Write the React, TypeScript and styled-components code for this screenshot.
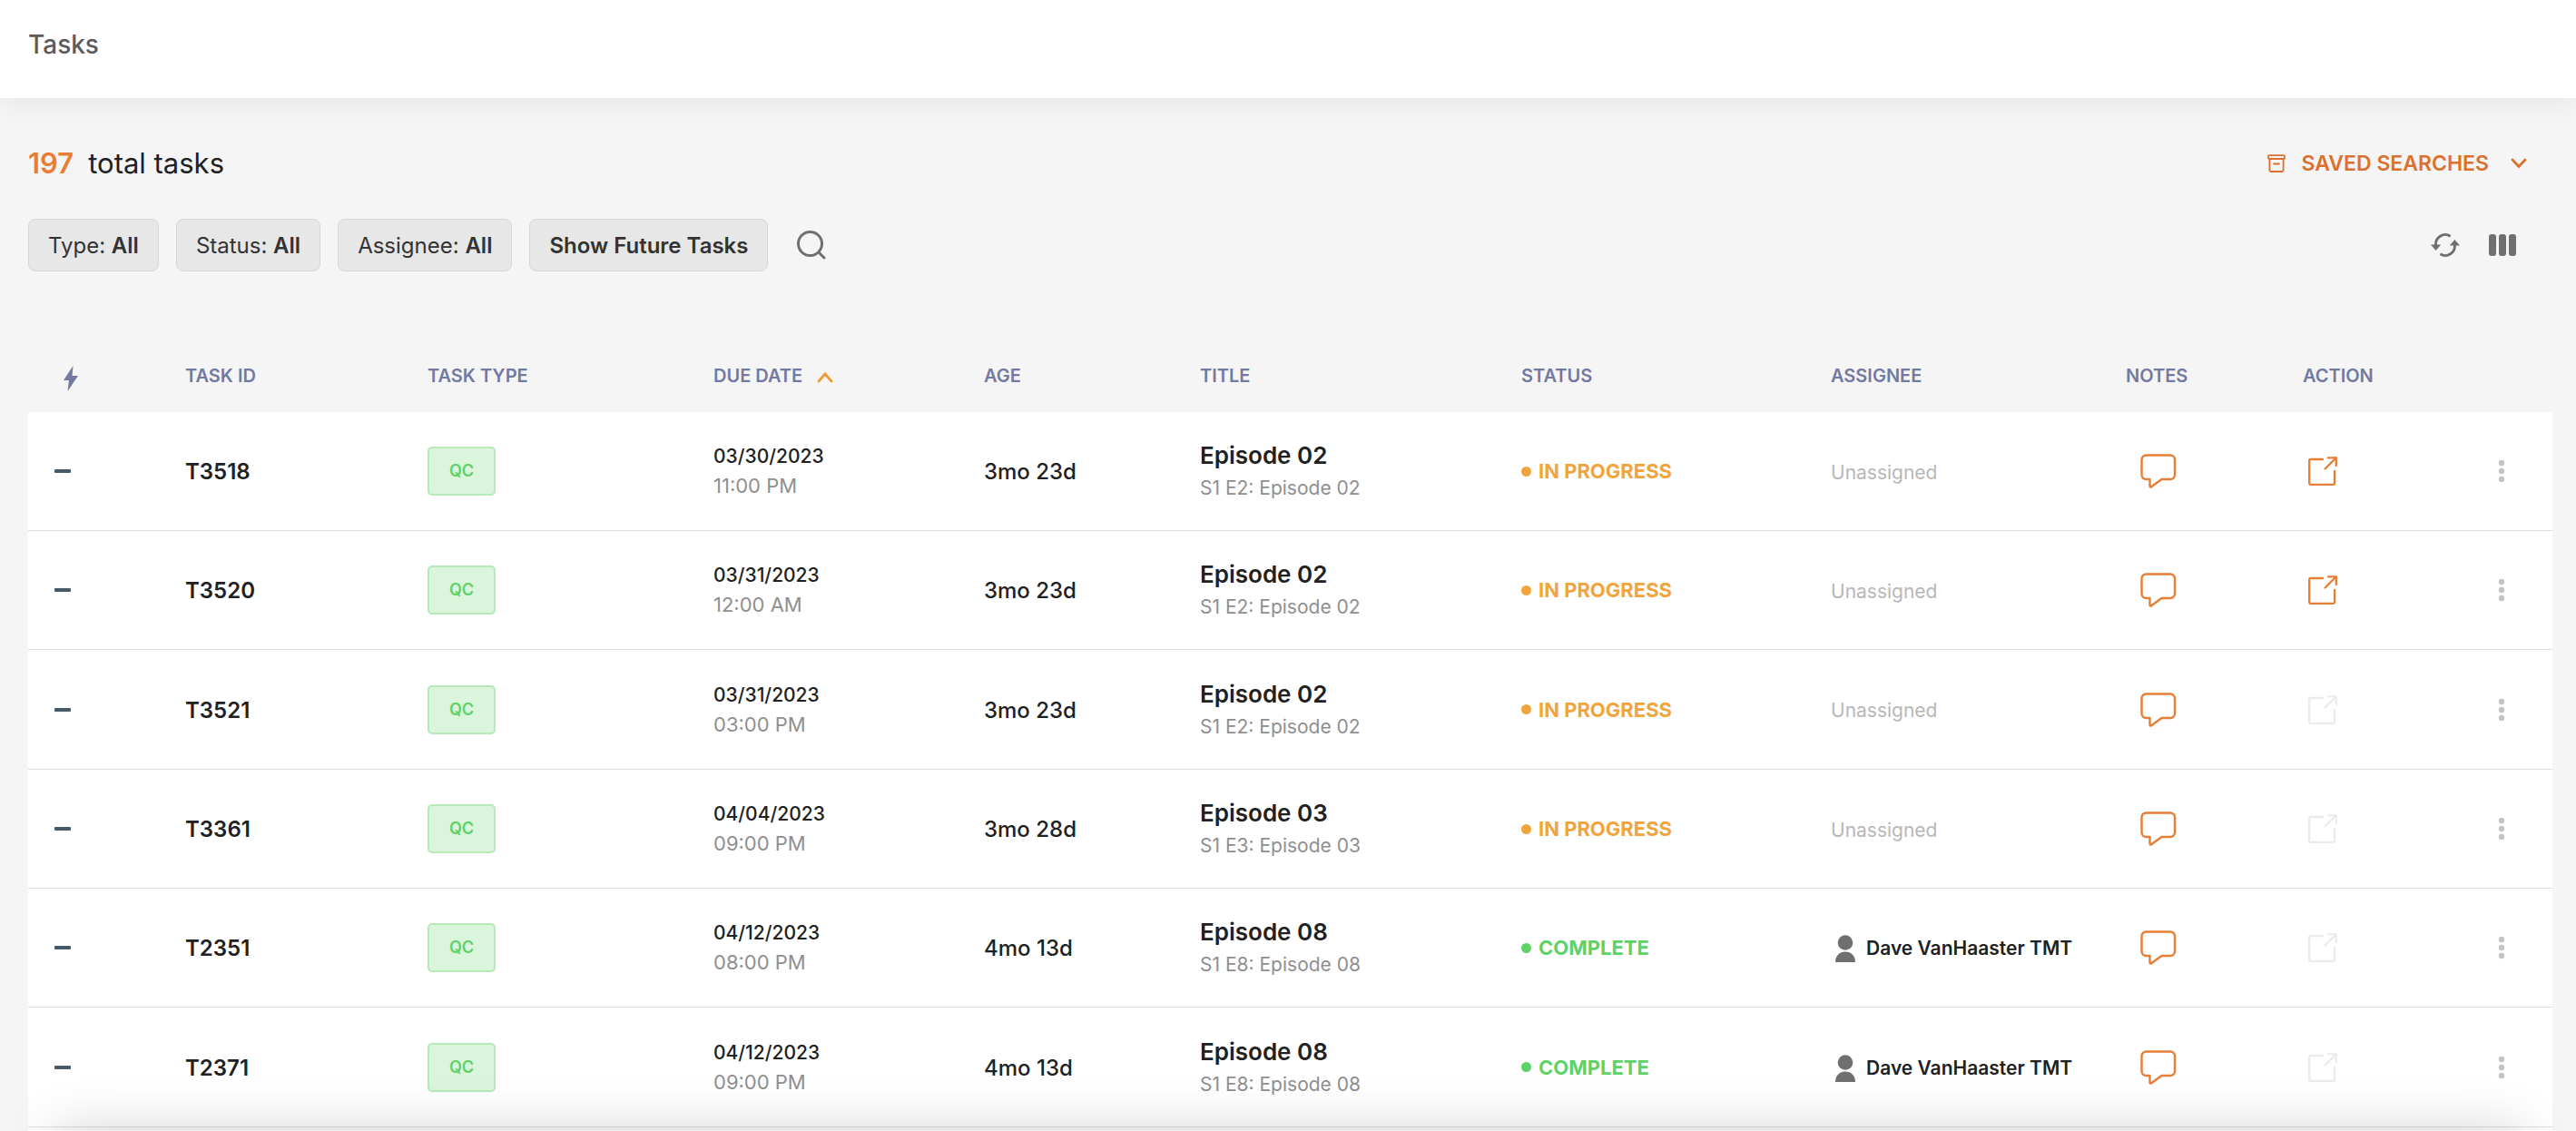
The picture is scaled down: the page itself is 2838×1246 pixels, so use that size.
import React from "react";
import styled, { createGlobalStyle } from "styled-components";

const GlobalStyle = createGlobalStyle`
  * { box-sizing: border-box; }
  body {
    margin: 0;
    background: #f5f5f5;
    color: #212121;
    font-family: Inter, "Liberation Sans", sans-serif;
    -webkit-font-smoothing: antialiased;
  }
  button { font: inherit; color: inherit; cursor: pointer; }
  h1, p { margin: 0; font-weight: 400; }
`;

const Page = styled.div`
  display: flex;
  flex-direction: column;
  height: 100vh;
  overflow: hidden;
`;

const TopBar = styled.header`
  flex: none;
  height: 108px;
  padding: 32px 31px;
  background: #fff;
  box-shadow: 0 0 36px rgba(0, 0, 0, 0.09);
`;

const PageTitle = styled.h1`
  font-size: 28px;
  line-height: 34px;
  font-weight: 500;
  color: #5b5b5b;
`;

const Main = styled.main`
  flex: 1;
  min-height: 0;
  display: flex;
  flex-direction: column;
  padding: 52px 26px 0 31px;
`;

const Bar = styled.div`
  display: flex;
  align-items: center;
  justify-content: space-between;
  padding-right: 28px;
`;

const SummaryBar = styled(Bar)`
  height: 40px;
`;

const Total = styled.p`
  font-size: 31px;
  line-height: 40px;
`;

const Count = styled.strong`
  margin-right: 16px;
  font-weight: 600;
  color: #e67e36;
`;

const SavedSearches = styled.button`
  display: flex;
  align-items: center;
  padding: 0;
  border: 0;
  background: none;
  color: #db702f;
  font-size: 23px;
  line-height: 30px;
  font-weight: 600;
`;

const SavedLabel = styled.span`
  margin: 0 24px 0 18px;
`;

const FilterBar = styled(Bar)`
  height: 58px;
  margin-top: 41px;
  padding-right: 40px;
`;

const Filters = styled.div`
  display: flex;
  align-items: center;
  gap: 19px;
`;

const FilterButton = styled.button`
  height: 58px;
  padding: 2px 21px 0;
  border: 1px solid #d6d6d6;
  border-radius: 8px;
  background: #e7e7e7;
  color: #333;
  font-size: 24px;
  line-height: 30px;

  strong { font-weight: 600; }
`;

const IconButton = styled.button<{ $tone?: string }>`
  display: inline-flex;
  align-items: center;
  justify-content: center;
  padding: 0;
  border: 0;
  background: none;
  color: ${(p) => p.$tone ?? "#6f6f6f"};
  vertical-align: middle;

  &:disabled { cursor: default; }
`;

const SearchButton = styled(IconButton)`
  margin-left: 13px;
`;

const Tools = styled.div`
  display: flex;
  align-items: center;
  gap: 32px;
`;

const TableArea = styled.div`
  flex: 1;
  min-height: 0;
  margin-top: 80px;
  display: flex;
  flex-direction: column;
  overflow: hidden;
`;

const Table = styled.table`
  flex: none;
  width: 100%;
  table-layout: fixed;
  border-collapse: separate;
  border-spacing: 0;
  text-align: left;
`;

const HeadCell = styled.th`
  height: 75px;
  padding: 0 0 6px;
  color: #7279a2;
  font-size: 20px;
  line-height: 24px;
  font-weight: 600;
  white-space: nowrap;
`;

const PriorityHead = styled(HeadCell)`
  padding: 0 0 0 38px;

  svg { display: block; }
`;

const SortButton = styled.button`
  display: flex;
  align-items: center;
  gap: 16px;
  padding: 0;
  border: 0;
  background: none;
`;

const Row = styled.tr`
  height: 131px;

  &:nth-child(3n) { height: 132px; }
`;

const Cell = styled.td`
  padding: 0;
  border-bottom: 1px solid #dedede;
  background: #fff;
  font-size: 24px;
  line-height: 30px;
  font-weight: 500;
  white-space: nowrap;
`;

const TextCell = styled(Cell)`
  padding-top: 2px;
`;

const PriorityCell = styled(Cell)`
  padding-left: 29px;
`;

const IdCell = styled(TextCell)`
  font-weight: 600;
`;

const Dash = styled.span`
  display: block;
  width: 18px;
  height: 4px;
  border-radius: 1px;
  background: #475a6a;
`;

const TypeTag = styled.span`
  display: flex;
  align-items: center;
  justify-content: center;
  width: 75px;
  height: 54px;
  border: 2px solid #b5eab8;
  border-radius: 5px;
  background: #dbf4dc;
  color: #5fd267;
  font-size: 18px;
  line-height: 24px;
  font-weight: 600;
`;

const DateText = styled.div`
  font-size: 21px;
  line-height: 32px;
`;

const TimeText = styled.div`
  font-size: 22px;
  line-height: 32px;
  font-weight: 400;
  color: #8f8f8f;
`;

const TitleText = styled.div`
  font-size: 26px;
  line-height: 36px;
  font-weight: 600;
`;

const SubtitleText = styled.div`
  font-size: 21px;
  line-height: 36px;
  font-weight: 400;
  color: #8f8f8f;
`;

const Status = styled.span<{ $done: boolean }>`
  display: flex;
  align-items: center;
  gap: 8px;
  color: ${(p) => (p.$done ? "#5fd267" : "#f2a43c")};
  font-size: 22px;
  line-height: 28px;
  font-weight: 700;

  &::before {
    content: "";
    width: 11px;
    height: 11px;
    border-radius: 50%;
    background: currentColor;
  }
`;

const Unassigned = styled.span`
  font-size: 21px;
  font-weight: 400;
  color: #b7b7b7;
`;

const Assignee = styled.span`
  display: flex;
  align-items: center;
  gap: 12px;
  padding-left: 5px;
  font-size: 21px;
  font-weight: 600;
`;

const NotesCell = styled(Cell)`
  padding-left: 16px;
`;

const ActionCell = styled(Cell)`
  padding-left: 6px;
`;

const ActionGroup = styled.div`
  display: flex;
  align-items: center;
  justify-content: space-between;
  padding-right: 52px;
`;

const RowsEnd = styled.div`
  flex: 1;
  background: #fff;
`;

const BottomShade = styled.div`
  position: fixed;
  left: 0;
  right: 0;
  top: 100%;
  height: 300px;
  pointer-events: none;
  box-shadow: 0 -60px 60px -60px rgba(0, 0, 0, 0.18);
`;

const ArchiveIcon = () => (
  <svg width="20" height="20" viewBox="0 0 20 20" fill="none" stroke="currentColor" strokeWidth="1.8" aria-hidden="true">
    <rect x="1" y="1.2" width="18" height="3.8" rx="1.2" />
    <path d="M2.4 5v12a2 2 0 0 0 2 2h11.200a2 2 0 0 0 2-2V5" />
    <path d="M7 10.500h6" strokeLinecap="round" />
  </svg>
);

const ChevronDownIcon = () => (
  <svg width="18" height="12" viewBox="0 0 18 12" fill="none" stroke="currentColor" strokeWidth="2.8" strokeLinecap="round" aria-hidden="true">
    <path d="M2 2l7 7.500 7-7.500" />
  </svg>
);

const SortUpIcon = () => (
  <svg width="18" height="16" viewBox="0 0 18 16" fill="none" stroke="#f49a33" strokeWidth="2.8" strokeLinecap="round" aria-hidden="true">
    <path d="M2 14l7-8 7 8" />
  </svg>
);

const SearchIcon = () => (
  <svg width="32" height="32" viewBox="0 0 32 32" fill="none" stroke="currentColor" strokeWidth="3" strokeLinecap="round" aria-hidden="true">
    <circle cx="14.500" cy="14.500" r="13" />
    <path d="M24 24l6 6" />
  </svg>
);

const RefreshIcon = () => (
  <svg width="32" height="26" viewBox="0 0 32 26" aria-hidden="true">
    <g fill="none" stroke="currentColor" strokeWidth="2.8">
      <path d="M5.600 13.500A10.500 10.500 0 0 1 21.600 3.200" />
      <path d="M26.400 12.500A10.500 10.500 0 0 1 10.400 22.800" />
    </g>
    <path d="M0 12.500h11.200L5.600 19z" fill="currentColor" />
    <path d="M20.800 13.500H32L26.400 7z" fill="currentColor" />
  </svg>
);

const ColumnsIcon = () => (
  <svg width="30" height="24" viewBox="0 0 30 24" fill="currentColor" aria-hidden="true">
    <rect x="0" y="0" width="8" height="24" rx="3" />
    <rect x="11" y="0" width="8" height="24" rx="3" />
    <rect x="22" y="0" width="8" height="24" rx="3" />
  </svg>
);

const BoltIcon = () => (
  <svg width="18" height="28" viewBox="0 0 18 28" fill="currentColor" role="img" aria-label="Priority">
    <path d="M11.500 0L1 16h6L5.500 28 17 11h-6.500z" />
  </svg>
);

const NoteIcon = () => (
  <svg width="40" height="38" viewBox="0 0 40 38" fill="none" stroke="currentColor" strokeWidth="2.4" strokeLinejoin="round" aria-hidden="true">
    <path d="M6.500 1.500h26.500a5 5 0 0 1 5 5v16.500a5 5 0 0 1-5 5H23.500L12.200 36.300a1 1 0 0 1-1.700-.8V28H6.500a5 5 0 0 1-5-5V6.500a5 5 0 0 1 5-5z" />
  </svg>
);

const OpenIcon = () => (
  <svg width="32" height="32" viewBox="0 0 32 32" fill="none" stroke="currentColor" strokeWidth="2.3" strokeLinecap="round" strokeLinejoin="round" aria-hidden="true">
    <path d="M16 3H2.400a1.200 1.200 0 0 0-1.200 1.200v25.400a1.200 1.200 0 0 0 1.200 1.200h25.400a1.200 1.200 0 0 0 1.200-1.200V16" />
    <path d="M18.500 13.500L30.500 1.500" />
    <path d="M22 1.300h8.800v8.800" />
  </svg>
);

const KebabIcon = () => (
  <svg width="8" height="28" viewBox="0 0 8 28" fill="currentColor" aria-hidden="true">
    <circle cx="4" cy="5" r="3.200" />
    <circle cx="4" cy="14" r="3.200" />
    <circle cx="4" cy="23" r="3.200" />
  </svg>
);

const PersonIcon = () => (
  <svg width="22" height="30" viewBox="0 0 22 30" fill="#6f6f6f" aria-hidden="true">
    <circle cx="11" cy="8.500" r="8.300" />
    <path d="M0 30c0-7 4.500-11.500 11-11.500S22 23 22 30z" />
  </svg>
);

type Task = {
  id: string;
  date: string;
  time: string;
  age: string;
  episode: string;
  sub: string;
  done: boolean;
  assignee?: string;
  canOpen: boolean;
};

const tasks: Task[] = [
  { id: "T3518", date: "03/30/2023", time: "11:00 PM", age: "3mo 23d", episode: "Episode 02", sub: "S1 E2: Episode 02", done: false, canOpen: true },
  { id: "T3520", date: "03/31/2023", time: "12:00 AM", age: "3mo 23d", episode: "Episode 02", sub: "S1 E2: Episode 02", done: false, canOpen: true },
  { id: "T3521", date: "03/31/2023", time: "03:00 PM", age: "3mo 23d", episode: "Episode 02", sub: "S1 E2: Episode 02", done: false, canOpen: false },
  { id: "T3361", date: "04/04/2023", time: "09:00 PM", age: "3mo 28d", episode: "Episode 03", sub: "S1 E3: Episode 03", done: false, canOpen: false },
  { id: "T2351", date: "04/12/2023", time: "08:00 PM", age: "4mo 13d", episode: "Episode 08", sub: "S1 E8: Episode 08", done: true, assignee: "Dave VanHaaster TMT", canOpen: false },
  { id: "T2371", date: "04/12/2023", time: "09:00 PM", age: "4mo 13d", episode: "Episode 08", sub: "S1 E8: Episode 08", done: true, assignee: "Dave VanHaaster TMT", canOpen: false },
];

const filters = [
  { label: "Type: ", value: "All" },
  { label: "Status: ", value: "All" },
  { label: "Assignee: ", value: "All" },
  { label: "", value: "Show Future Tasks" },
];

/* Shares of the table width; the fixed layout scales them to the window. */
const columnWidths = [173, 267, 315, 298, 238, 354, 341, 325, 195, 275];

export default function App() {
  return (
    <Page>
      <GlobalStyle />
      <TopBar>
        <PageTitle>Tasks</PageTitle>
      </TopBar>
      <Main>
        <SummaryBar>
          <Total>
            <Count>197</Count>total tasks
          </Total>
          <SavedSearches type="button">
            <ArchiveIcon />
            <SavedLabel>SAVED SEARCHES</SavedLabel>
            <ChevronDownIcon />
          </SavedSearches>
        </SummaryBar>
        <FilterBar>
          <Filters>
            {filters.map((f) => (
              <FilterButton type="button" key={f.label + f.value}>
                {f.label}
                <strong>{f.value}</strong>
              </FilterButton>
            ))}
            <SearchButton type="button" aria-label="Search">
              <SearchIcon />
            </SearchButton>
          </Filters>
          <Tools>
            <IconButton type="button" aria-label="Refresh">
              <RefreshIcon />
            </IconButton>
            <IconButton type="button" aria-label="Columns">
              <ColumnsIcon />
            </IconButton>
          </Tools>
        </FilterBar>
        <TableArea>
          <Table>
            <colgroup>
              {columnWidths.map((w, i) => (
                <col key={i} width={w} />
              ))}
            </colgroup>
            <thead>
              <tr>
                <PriorityHead><BoltIcon /></PriorityHead>
                <HeadCell>TASK ID</HeadCell>
                <HeadCell>TASK TYPE</HeadCell>
                <HeadCell aria-sort="ascending">
                  <SortButton type="button">DUE DATE<SortUpIcon /></SortButton>
                </HeadCell>
                <HeadCell>AGE</HeadCell>
                <HeadCell>TITLE</HeadCell>
                <HeadCell>STATUS</HeadCell>
                <HeadCell>ASSIGNEE</HeadCell>
                <HeadCell>NOTES</HeadCell>
                <HeadCell>ACTION</HeadCell>
              </tr>
            </thead>
            <tbody>
              {tasks.map((t) => (
                <Row key={t.id}>
                  <PriorityCell><Dash /></PriorityCell>
                  <IdCell>{t.id}</IdCell>
                  <Cell><TypeTag>QC</TypeTag></Cell>
                  <Cell>
                    <DateText>{t.date}</DateText>
                    <TimeText>{t.time}</TimeText>
                  </Cell>
                  <TextCell>{t.age}</TextCell>
                  <TextCell>
                    <TitleText>{t.episode}</TitleText>
                    <SubtitleText>{t.sub}</SubtitleText>
                  </TextCell>
                  <Cell>
                    <Status $done={t.done}>{t.done ? "COMPLETE" : "IN PROGRESS"}</Status>
                  </Cell>
                  <TextCell>
                    {t.assignee ? (
                      <Assignee><PersonIcon />{t.assignee}</Assignee>
                    ) : (
                      <Unassigned>Unassigned</Unassigned>
                    )}
                  </TextCell>
                  <NotesCell>
                    <IconButton type="button" $tone="#e67e36" aria-label="Notes"><NoteIcon /></IconButton>
                  </NotesCell>
                  <ActionCell>
                    <ActionGroup>
                      <IconButton type="button" $tone={t.canOpen ? "#e67e36" : "#ebebeb"} disabled={!t.canOpen} aria-label="Open task">
                        <OpenIcon />
                      </IconButton>
                      <IconButton type="button" $tone="#c4c4c4" aria-label="More options"><KebabIcon /></IconButton>
                    </ActionGroup>
                  </ActionCell>
                </Row>
              ))}
            </tbody>
          </Table>
          <RowsEnd />
        </TableArea>
      </Main>
      <BottomShade />
    </Page>
  );
}
